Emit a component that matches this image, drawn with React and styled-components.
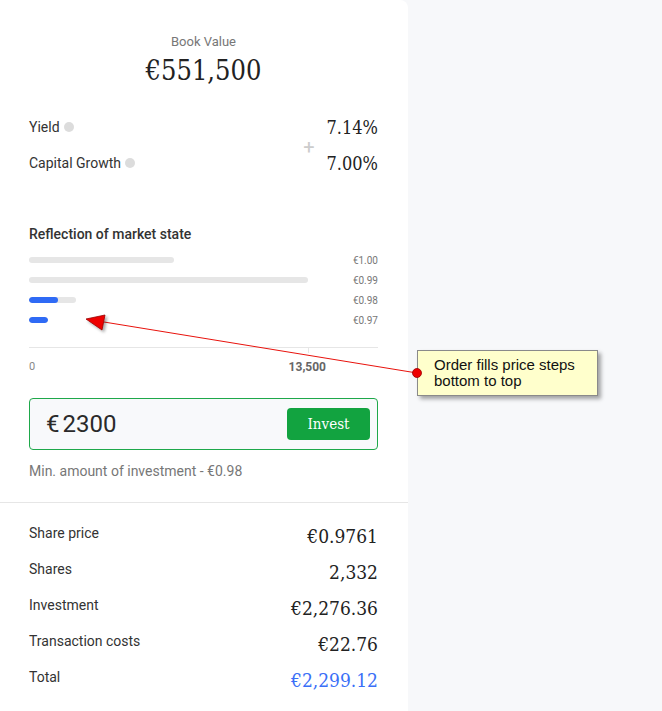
import React from "react";
import styled, { createGlobalStyle } from "styled-components";

const GlobalStyle = createGlobalStyle`
  html, body {
    margin: 0;
    padding: 0;
    background: #f7f8fa;
    font-family: Roboto, "Noto Sans", sans-serif;
    color: #333;
  }
`;

const SLAB = `"DejaVu Serif Condensed", "DejaVu Serif", "Liberation Serif", serif`;

const Page = styled.div`
  position: relative;
  width: 662px;
  height: 711px;
  overflow: hidden;
`;

const Panel = styled.div`
  width: 408px;
  height: 711px;
  background: #fff;
  border-top-right-radius: 8px;
  box-sizing: border-box;
`;

const Section = styled.div`
  padding: 0 30px 0 29px;
  border-bottom: ${(p) => (p.$divider ? "1px solid #e6e6e6" : "none")};
`;

const Header = styled.div`
  display: flex;
  flex-direction: column;
  align-items: center;
  padding-top: 34px;
`;

const HeaderLabel = styled.div`
  font-size: 13px;
  color: #777;
  line-height: 16px;
`;

const HeaderValue = styled.div`
  font-family: ${SLAB};
  font-stretch: condensed;
  font-size: 27px;
  color: #222;
  line-height: 30px;
  margin-top: 6px;
`;

const Growth = styled.div`
  display: flex;
  align-items: center;
  margin-top: 27px;
`;

const GrowthLabels = styled.div`
  display: flex;
  flex-direction: column;
  gap: 18px;
  flex: 1;
`;

const GrowthLabel = styled.div`
  display: flex;
  align-items: center;
  gap: 4px;
  font-size: 14px;
  line-height: 18px;
  color: #333;
`;

const Dot = styled.span`
  width: 10px;
  height: 10px;
  border-radius: 50%;
  background: #dcdcdc;
`;

const Plus = styled.div`
  font-size: 20px;
  color: #ccc;
  margin-right: 12px;
  margin-top: 4px;
`;

const GrowthValues = styled.div`
  display: flex;
  flex-direction: column;
  align-items: flex-end;
  gap: 12px;
  padding-top: 3px;
`;

const GrowthValue = styled.div`
  font-family: ${SLAB};
  font-stretch: condensed;
  font-size: 18px;
  line-height: 24px;
  color: #222;
`;

const ChartTitle = styled.div`
  font-size: 14px;
  font-weight: 500;
  color: #333;
  margin-top: 49px;
  line-height: 18px;
`;

const Steps = styled.div`
  display: flex;
  flex-direction: column;
  gap: 14px;
  margin-top: 14px;
`;

const StepRow = styled.div`
  display: flex;
  align-items: center;
  height: 6px;
`;

const Track = styled.div`
  width: 279px;
  height: 6px;
  display: flex;
`;

const Bar = styled.div`
  height: 6px;
  border-radius: 3px;
  background: #e6e6e6;
  overflow: hidden;
`;

const Fill = styled.div`
  height: 6px;
  border-radius: 3px;
  background: #2f6af5;
`;

const StepPrice = styled.div`
  flex: 1;
  text-align: right;
  font-size: 10px;
  color: #777;
`;

const Axis = styled.div`
  position: relative;
  margin-top: 24px;
  border-top: 1px solid #e6e6e6;
  height: 28px;
`;

const Tick = styled.div`
  position: absolute;
  left: ${(p) => p.$at}px;
  top: 0;
  width: 1px;
  height: 5px;
  background: #e6e6e6;
`;

const AxisLabels = styled.div`
  display: flex;
  justify-content: space-between;
  width: 297px;
  padding-top: 12px;
  font-size: 11px;
  line-height: 14px;
  color: #888;
`;

const AxisMax = styled.span`
  font-size: 12px;
  font-weight: 700;
  color: #666;
`;

const InputBox = styled.div`
  display: flex;
  align-items: center;
  justify-content: space-between;
  height: 52px;
  margin-top: 22px;
  box-sizing: border-box;
  border: 1px solid #1ea84a;
  border-radius: 4px;
  background: #f8f9fb;
  padding: 0 7px 0 16px;
`;

const Amount = styled.div`
  font-size: 24px;
  color: #2a2a2a;
  display: flex;
  gap: 3px;
`;

const InvestButton = styled.button`
  width: 83px;
  height: 32px;
  border: none;
  border-radius: 4px;
  background: #12a340;
  color: #fff;
  font-family: ${SLAB};
  font-stretch: condensed;
  font-size: 15px;
  cursor: pointer;
`;

const MinNote = styled.div`
  font-size: 14px;
  color: #777;
  margin-top: 12px;
  padding-bottom: 22px;
  line-height: 18px;
`;

const Summary = styled.div`
  display: flex;
  flex-direction: column;
  gap: 12px;
  padding-top: 21px;
`;

const SummaryRow = styled.div`
  display: flex;
  justify-content: space-between;
  align-items: center;
  height: 24px;
`;

const SummaryLabel = styled.div`
  font-size: 14px;
  color: #333;
  margin-top: -6px;
`;

const SummaryValue = styled.div`
  font-family: ${SLAB};
  font-stretch: condensed;
  font-size: 19px;
  color: ${(p) => (p.$accent ? "#3a6ff7" : "#222")};
`;

const Callout = styled.div`
  position: absolute;
  left: 417px;
  top: 350px;
  width: 181px;
  height: 46px;
  box-sizing: border-box;
  padding: 6px 0 0 16px;
  background: #ffffcc;
  border: 1px solid #8a8a8a;
  box-shadow: 3px 3px 4px rgba(0, 0, 0, 0.35);
  font-family: "Liberation Sans", Arial, sans-serif;
  font-size: 15px;
  line-height: 16px;
  color: #111;
`;

const Overlay = styled.svg`
  position: absolute;
  left: 0;
  top: 0;
  pointer-events: none;
`;

const steps = [
  { price: "€1.00", total: 145, filled: 0 },
  { price: "€0.99", total: 279, filled: 0 },
  { price: "€0.98", total: 47, filled: 29 },
  { price: "€0.97", total: 19, filled: 19 },
];

const summary = [
  ["Share price", "€0.9761"],
  ["Shares", "2,332"],
  ["Investment", "€2,276.36"],
  ["Transaction costs", "€22.76"],
  ["Total", "€2,299.12", true],
];

export default function App() {
  return (
    <Page>
      <GlobalStyle />
      <Panel>
        <Section $divider>
          <Header>
            <HeaderLabel>Book Value</HeaderLabel>
            <HeaderValue>€551,500</HeaderValue>
          </Header>

          <Growth>
            <GrowthLabels>
              <GrowthLabel>
                Yield <Dot />
              </GrowthLabel>
              <GrowthLabel>
                Capital Growth <Dot />
              </GrowthLabel>
            </GrowthLabels>
            <Plus>+</Plus>
            <GrowthValues>
              <GrowthValue>7.14%</GrowthValue>
              <GrowthValue>7.00%</GrowthValue>
            </GrowthValues>
          </Growth>

          <ChartTitle>Reflection of market state</ChartTitle>
          <Steps>
            {steps.map((s) => (
              <StepRow key={s.price}>
                <Track>
                  <Bar style={{ width: s.total }}>
                    <Fill style={{ width: s.filled }} />
                  </Bar>
                </Track>
                <StepPrice>{s.price}</StepPrice>
              </StepRow>
            ))}
          </Steps>
          <Axis>
            <Tick $at={279} />
            <AxisLabels>
              <span>0</span>
              <AxisMax>13,500</AxisMax>
            </AxisLabels>
          </Axis>

          <InputBox>
            <Amount>
              <span>€</span>
              <span>2300</span>
            </Amount>
            <InvestButton>Invest</InvestButton>
          </InputBox>
          <MinNote>Min. amount of investment - €0.98</MinNote>
        </Section>

        <Section>
          <Summary>
            {summary.map(([label, value, accent]) => (
              <SummaryRow key={label}>
                <SummaryLabel>{label}</SummaryLabel>
                <SummaryValue $accent={accent}>{value}</SummaryValue>
              </SummaryRow>
            ))}
          </Summary>
        </Section>
      </Panel>

      <Callout>
        Order fills price steps
        <br />
        bottom to top
      </Callout>
      <Overlay width="662" height="711">
        <defs>
          <filter id="sh" x="-50%" y="-50%" width="200%" height="200%">
            <feDropShadow dx="2" dy="2" stdDeviation="1.5" floodColor="#000" floodOpacity="0.35" />
          </filter>
        </defs>
        <line x1="417" y1="373" x2="104" y2="322" stroke="#e8120c" strokeWidth="1" />
        <polygon points="86,319 105,315 102,330" fill="#e00" stroke="#900" strokeWidth="0.8" filter="url(#sh)" />
        <circle cx="417" cy="373" r="4.5" fill="#e00" stroke="#900" strokeWidth="0.8" />
      </Overlay>
    </Page>
  );
}
